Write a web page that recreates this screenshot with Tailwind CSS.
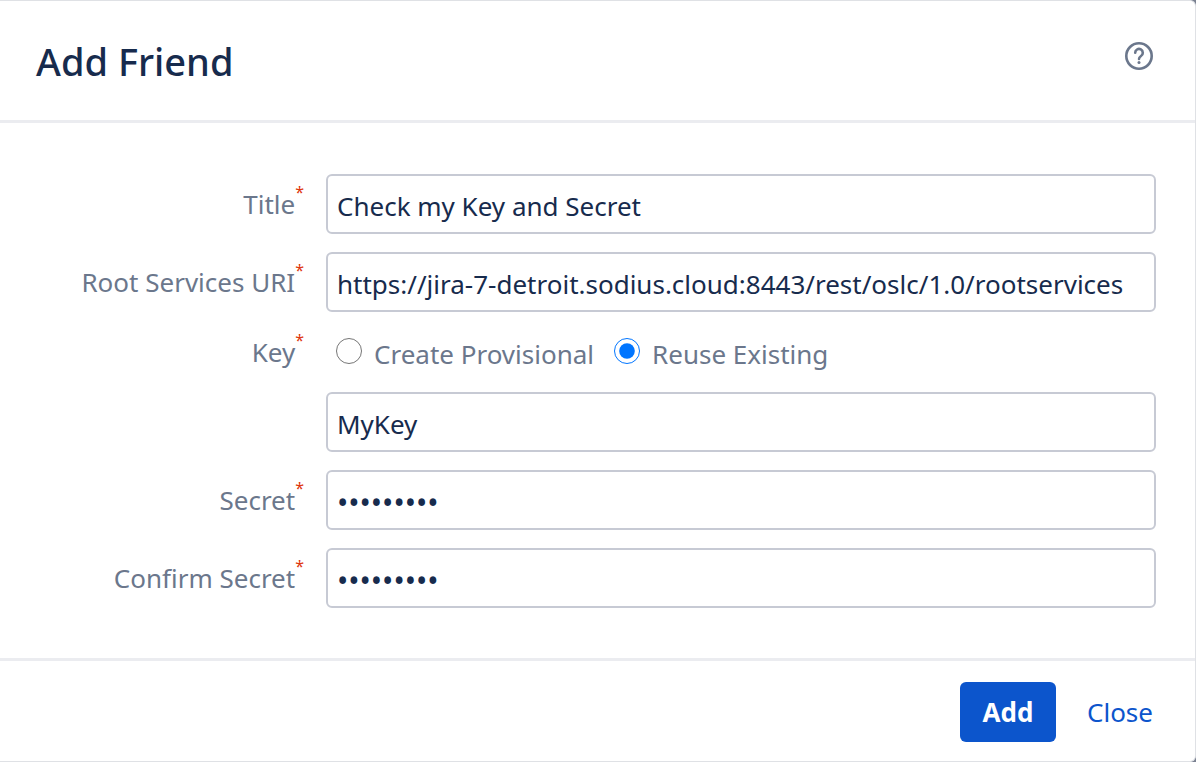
<!DOCTYPE html>
<html lang="en">
<head>
    <meta charset="UTF-8">
    <meta name="viewport" content="width=device-width, initial-scale=1.0">
    <title>Add Friend</title>
    <script src="https://cdn.jsdelivr.net/npm/@tailwindcss/browser@4"></script>
</head>
<body class="bg-[#7a8191] font-['Noto_Sans','Open_Sans',sans-serif] text-[26px] leading-9 text-[#6b778c]">
    <main class="min-h-screen flex flex-col bg-white border border-l-0 border-[#dfe1e5] rounded-r-md">
        <header class="flex items-start justify-between pl-9 pr-10 pt-[34px] pb-[33px] border-b-3 border-[#ebecf0]">
            <h1 class="text-[38px] leading-[52px] font-medium text-[#172b4d]">Add Friend</h1>
            <button type="button" aria-label="Help" class="mt-1 text-[#6b778c]">
                <svg class="size-8" viewBox="0 0 32 32" fill="none" stroke="currentColor" stroke-width="2.6" stroke-linecap="round" stroke-linejoin="round">
                    <circle cx="16" cy="17" r="12.7"/>
                    <path d="M12.2 13.8a3.8 3.8 0 1 1 5.8 3.2c-1.3.9-2 1.5-2 3"/>
                    <circle cx="16" cy="23.6" r="1.5" fill="currentColor" stroke="none"/>
                </svg>
            </button>
        </header>

        <form id="friendForm" class="flex-1 flex flex-col gap-[18px] pr-[39px] pt-[51px] pb-12">
            <div class="flex">
                <label for="title" class="w-[326px] shrink-0 pt-3 pr-[22px] text-right">Title<sup class="-top-4 text-base text-[#de350b]">*</sup></label>
                <input type="text" id="title" value="Check my Key and Secret" class="h-15 min-w-0 flex-1 px-[9px] pt-1 border-2 border-[#c7cad4] rounded-md text-[#172b4d]">
            </div>
            <div class="flex">
                <label for="uri" class="w-[326px] shrink-0 pt-3 pr-[22px] text-right">Root Services URI<sup class="-top-4 text-base text-[#de350b]">*</sup></label>
                <input type="text" id="uri" value="https://jira-7-detroit.sodius.cloud:8443/rest/oslc/1.0/rootservices" class="h-15 min-w-0 flex-1 px-[9px] pt-1 border-2 border-[#c7cad4] rounded-md text-[#172b4d]">
            </div>
            <div class="flex">
                <label for="key" class="w-[326px] shrink-0 pt-1 pr-[22px] text-right">Key<sup class="-top-4 text-base text-[#de350b]">*</sup></label>
                <div class="min-w-0 flex-1">
                    <div class="flex h-11 gap-5 pt-1 pl-[10px]">
                        <label class="flex gap-3"><input type="radio" name="keyMode" value="create" class="mt-1 size-[26px]"><span class="pt-[2px]">Create Provisional</span></label>
                        <label class="flex gap-3"><input type="radio" name="keyMode" value="reuse" checked class="mt-1 size-[26px]"><span class="pt-[2px]">Reuse Existing</span></label>
                    </div>
                    <input type="text" id="key" value="MyKey" class="mt-[18px] block h-15 w-full px-[9px] pt-1 border-2 border-[#c7cad4] rounded-md text-[#172b4d]">
                </div>
            </div>
            <div class="flex">
                <label for="secret" class="w-[326px] shrink-0 pt-3 pr-[22px] text-right">Secret<sup class="-top-4 text-base text-[#de350b]">*</sup></label>
                <input type="password" id="secret" value="my-secret" class="h-15 min-w-0 flex-1 px-[9px] pt-1 border-2 border-[#c7cad4] rounded-md text-[30px] text-[#172b4d]">
            </div>
            <div class="flex">
                <label for="confirmSecret" class="w-[326px] shrink-0 pt-3 pr-[22px] text-right">Confirm Secret<sup class="-top-4 text-base text-[#de350b]">*</sup></label>
                <input type="password" id="confirmSecret" value="my-secret" class="h-15 min-w-0 flex-1 px-[9px] pt-1 border-2 border-[#c7cad4] rounded-md text-[30px] text-[#172b4d]">
            </div>
        </form>

        <footer class="flex items-center justify-end gap-[31px] pt-[21px] pb-[19px] pr-[42px] border-t-3 border-[#ebecf0]">
            <button type="submit" form="friendForm" class="h-15 min-w-24 px-[22px] rounded-md bg-[#0c55cc] font-bold text-white">Add</button>
            <a href="#" class="text-[#0c55cc]">Close</a>
        </footer>
    </main>
</body>
</html>
